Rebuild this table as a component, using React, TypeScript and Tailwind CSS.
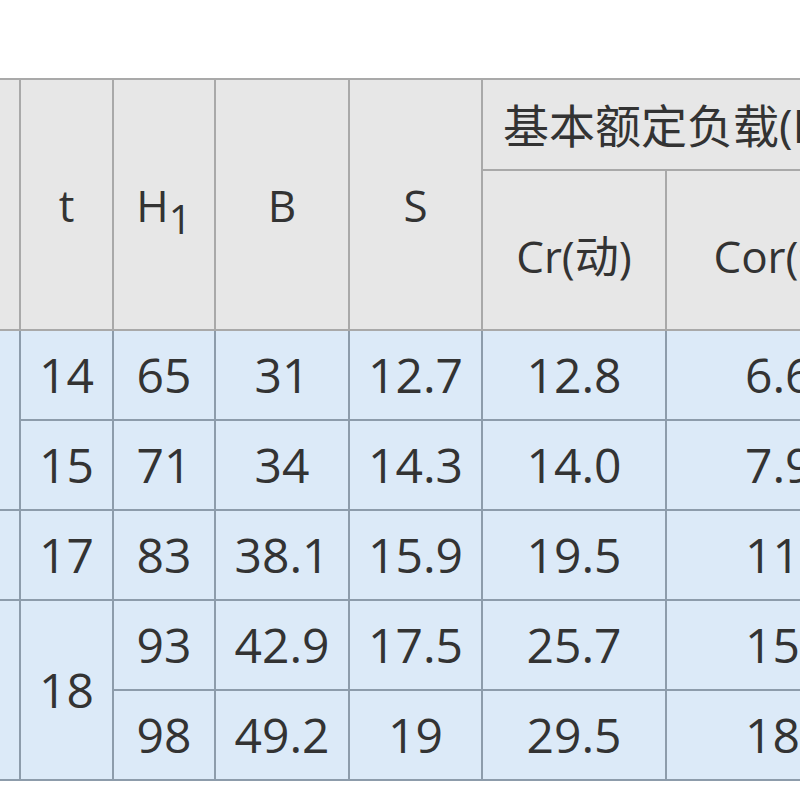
const rows = [
  { t: "14", tSpan: 1, h1: "65", b: "31", s: "12.7", cr: "12.8", cor: "6.65" },
  { t: "15", tSpan: 1, h1: "71", b: "34", s: "14.3", cr: "14.0", cor: "7.95" },
  { t: "17", tSpan: 1, h1: "83", b: "38.1", s: "15.9", cr: "19.5", cor: "11.5" },
  { t: "18", tSpan: 2, h1: "93", b: "42.9", s: "17.5", cr: "25.7", cor: "15.3" },
  { h1: "98", b: "49.2", s: "19", cr: "29.5", cor: "18.1" },
];

const lead = [2, 0, 1, 2, 0];

export default function App() {
  const th = "border-2 border-[#a9a9a9] bg-[#e7e7e7] font-normal text-[44px]";
  const td = "border-2 border-[#8d9cab] bg-[#dceaf8] text-center text-[48px] h-[90px]";
  return (
    <div
      className="w-[800px] h-[800px] overflow-hidden bg-white text-[#333] pt-[78px]"
      style={{ fontFamily: '"Open Sans", "Noto Sans CJK SC", sans-serif' }}
    >
      <table className="table-fixed border-collapse w-[895px] leading-none">
        <colgroup>
          <col className="w-[20px]" />
          <col className="w-[93px]" />
          <col className="w-[102px]" />
          <col className="w-[134px]" />
          <col className="w-[133px]" />
          <col className="w-[184px]" />
          <col className="w-[229px]" />
        </colgroup>
        <thead>
          <tr className="h-[91px]">
            <th rowSpan={2} className={`${th} border-l-0`}></th>
            <th rowSpan={2} className={th}>t</th>
            <th rowSpan={2} className={th}>
              H<sub className="text-[40px] relative top-[12px] align-baseline">1</sub>
            </th>
            <th rowSpan={2} className={th}>B</th>
            <th rowSpan={2} className={th}>S</th>
            <th colSpan={2} className={`${th} text-left pl-[20px] text-[46px]`}>基本额定负载(KN)</th>
          </tr>
          <tr className="h-[160px]">
            <th className={`${th} pt-[12px]`}>Cr(动)</th>
            <th className={`${th} pt-[12px] pl-[8px]`}>Cor(静)</th>
          </tr>
        </thead>
        <tbody>
          {rows.map((r, i) => (
            <tr key={i}>
              {lead[i] > 0 && (
                <td rowSpan={lead[i]} className={`${td} border-l-0`}></td>
              )}
              {r.t && (
                <td rowSpan={r.tSpan} className={td}>
                  {r.t}
                </td>
              )}
              <td className={td}>{r.h1}</td>
              <td className={td}>{r.b}</td>
              <td className={td}>{r.s}</td>
              <td className={td}>{r.cr}</td>
              <td className={`${td} text-left pl-[78px]`}>{r.cor}</td>
            </tr>
          ))}
        </tbody>
      </table>
    </div>
  );
}
